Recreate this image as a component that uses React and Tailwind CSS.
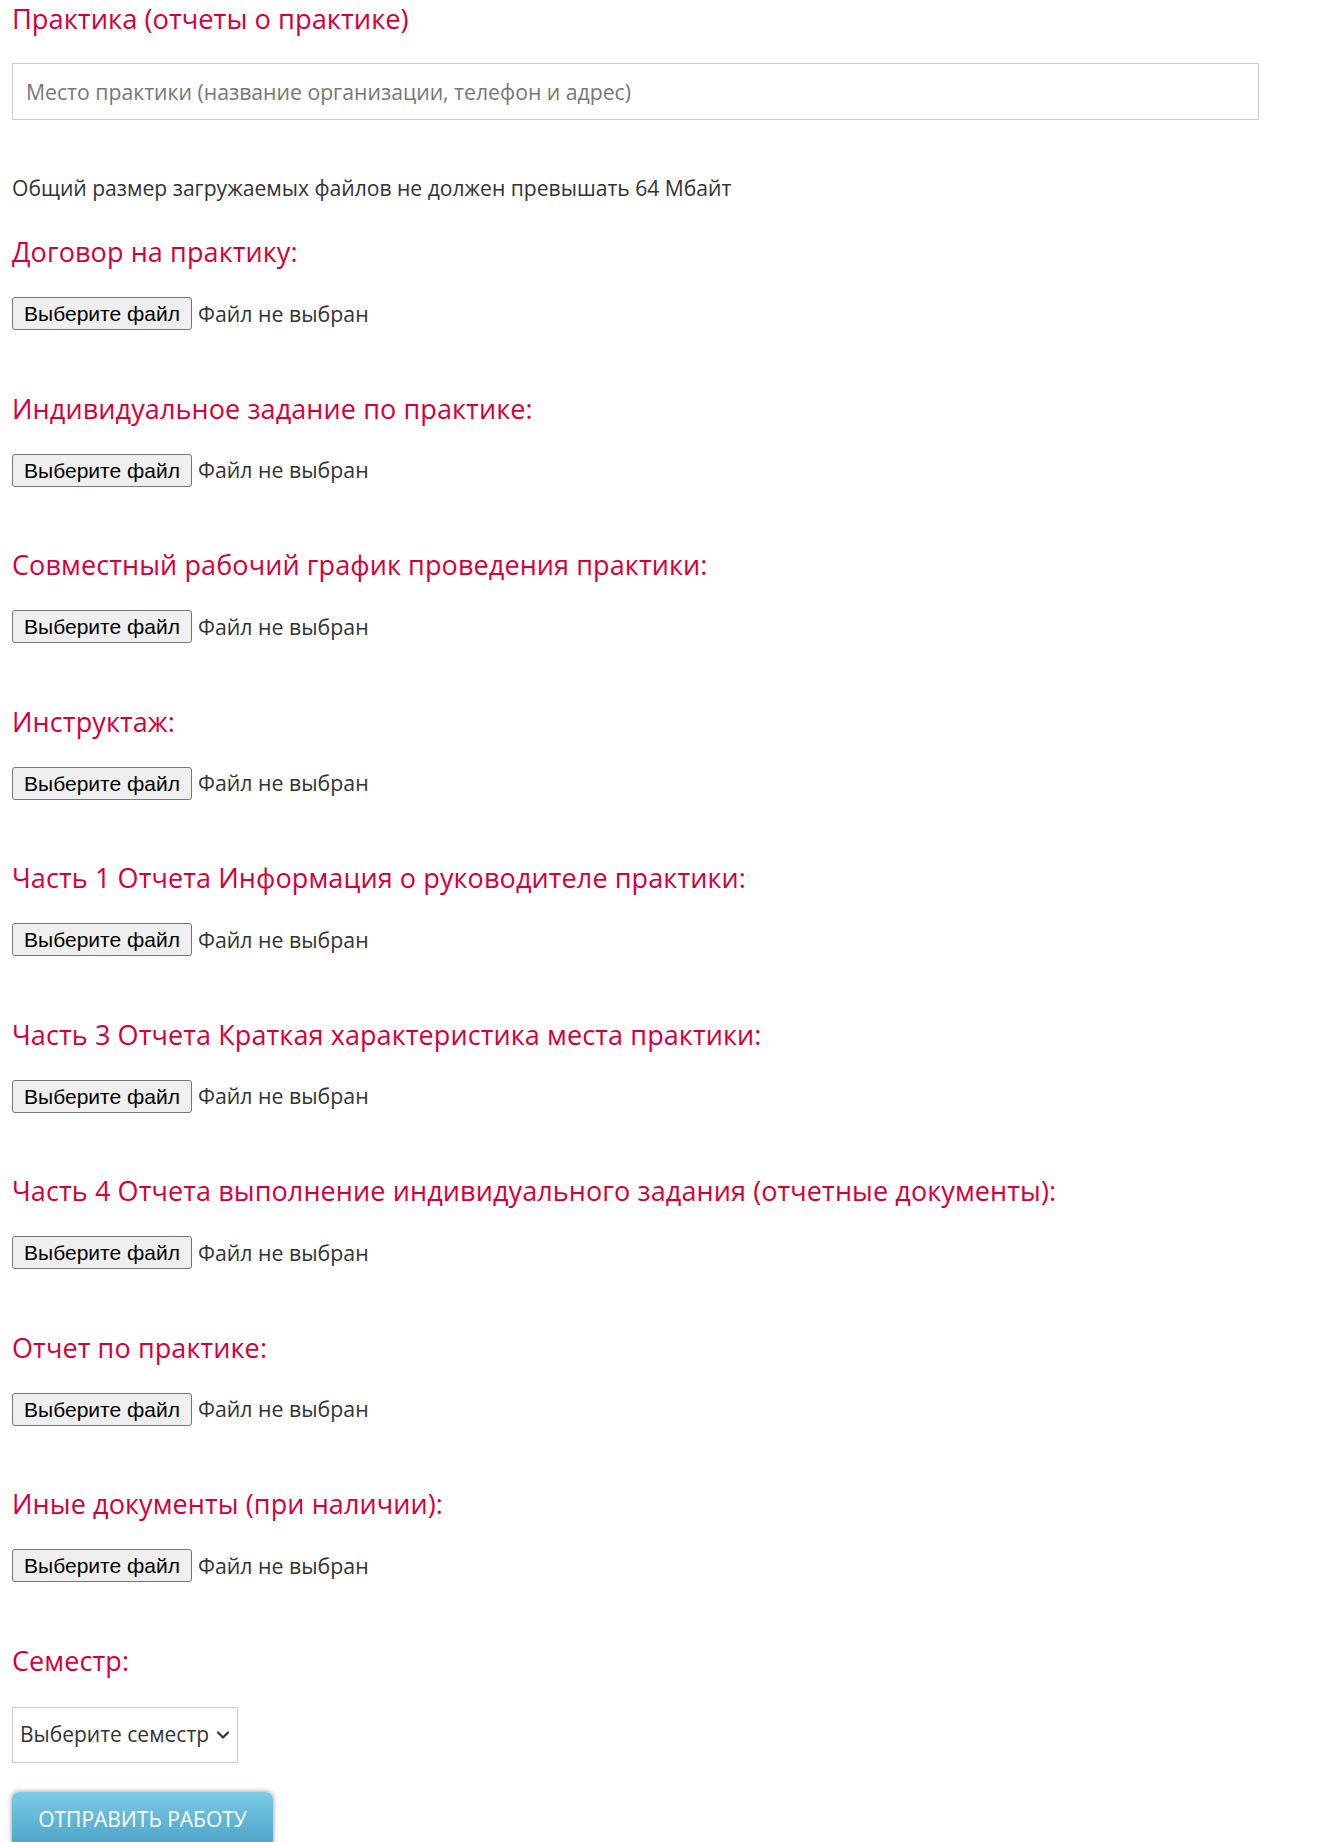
import React from 'react';

const sections = [
  'Договор на практику:',
  'Индивидуальное задание по практике:',
  'Совместный рабочий график проведения практики:',
  'Инструктаж:',
  'Часть 1 Отчета Информация о руководителе практики:',
  'Часть 3 Отчета Краткая характеристика места практики:',
  'Часть 4 Отчета выполнение индивидуального задания (отчетные документы):',
  'Отчет по практике:',
  'Иные документы (при наличии):',
];

function FileField() {
  return (
    <div className="mt-[27px] flex h-[33px] items-center">
      <button
        type="button"
        className="h-[33px] w-[180px] rounded-[3px] border border-[#767676] bg-[#efefef] text-[21px] text-black"
        style={{ fontFamily: '"Liberation Sans", Arial, sans-serif' }}
      >
        Выберите файл
      </button>
      <span className="ml-[6px] text-[21.3px] text-[#333]">Файл не выбран</span>
    </div>
  );
}

export default function App() {
  return (
    <div
      className="min-h-screen bg-white px-3 pt-px pb-10 text-[#333]"
      style={{ fontFamily: '"Open Sans", "Noto Sans", sans-serif' }}
    >
      <h2 className="h-[36px] text-[27.3px] leading-[36px] font-medium text-[#d5003a]">Практика (отчеты о практике)</h2>

      <input
        type="text"
        placeholder="Место практики (название организации, телефон и адрес)"
        className="mt-[26px] block h-[57px] w-[1247px] border border-[#cccccc] px-[13px] text-[21.2px] text-[#555] outline-none placeholder:text-[#777]"
      />

      <p className="mt-[54px] h-[28px] text-[21.1px] leading-[28px] text-[#333]">
        Общий размер загружаемых файлов не должен превышать 64 Мбайт
      </p>

      <div className="mt-[32px]">
        {sections.map((title, i) => (
          <section key={title} className={i === 0 ? '' : 'mt-[60.5px]'}>
            <h3 className="h-[36px] text-[27px] leading-[36px] font-medium tracking-[0.1px] text-[#d5003a]">{title}</h3>
            <FileField />
          </section>
        ))}

        <section className="mt-[60.5px]">
          <h3 className="h-[36px] text-[27px] leading-[36px] font-medium tracking-[0.1px] text-[#d5003a]">Семестр:</h3>
          <div className="mt-[28px] flex h-[56px] w-[226px] items-center justify-between border border-[#cccccc] pr-[7px] pl-[7px] text-[21px] text-[#333]">
            <span>Выберите семестр</span>
            <svg width="14" height="10" viewBox="0 0 14 10" fill="none" stroke="#333" strokeWidth="2.2" strokeLinecap="round" strokeLinejoin="round">
              <path d="M2 2.5l5 5 5-5" />
            </svg>
          </div>
        </section>

        <button
          type="button"
          className="mt-[29px] h-[56px] w-[261px] rounded-[7px] bg-gradient-to-b from-[#7ccbe7] to-[#49a1c5] text-[21px] uppercase text-white shadow-[0_0_5px_rgba(0,0,0,0.45)]"
        >
          Отправить работу
        </button>
      </div>
    </div>
  );
}
